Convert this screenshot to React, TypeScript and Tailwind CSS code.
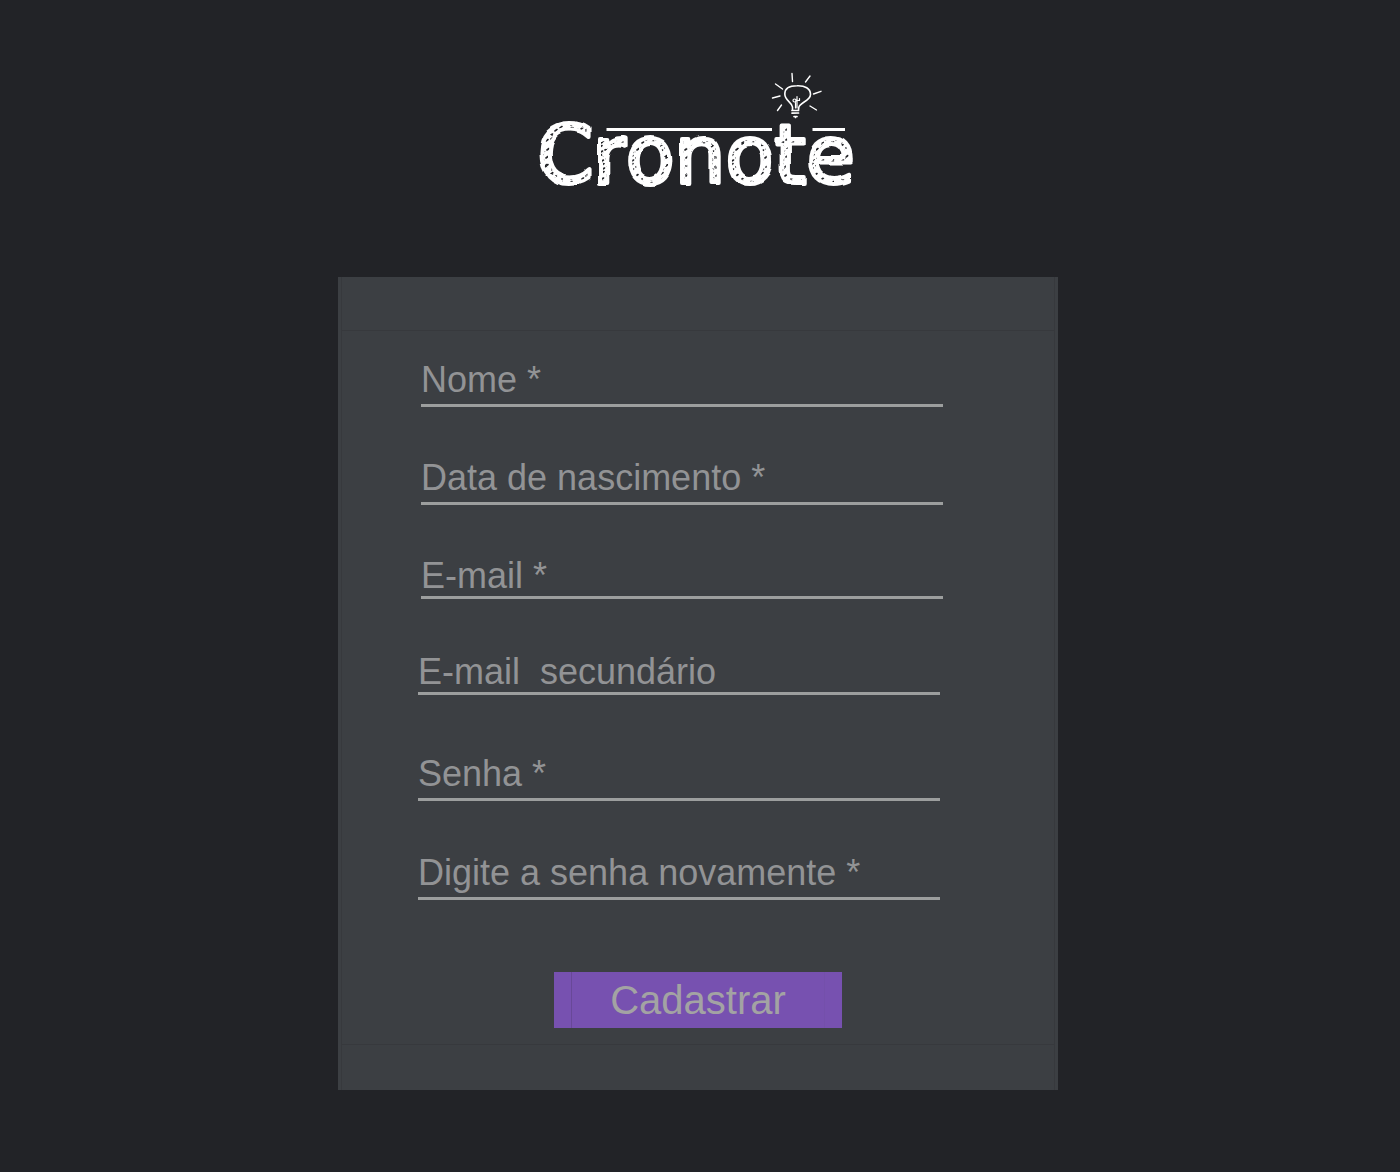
import React from "react";

type Field = { id: string; label: string; type: string; className: string };

const personal: Field[] = [
  { id: "nome", label: "Nome *", type: "text", className: "h-12 pb-1" },
  { id: "nascimento", label: "Data de nascimento *", type: "text", className: "mt-[50px] h-12 pb-1" },
  { id: "email", label: "E-mail *", type: "email", className: "mt-[50px] h-11" },
];

const access: Field[] = [
  { id: "email2", label: "E-mail  secundário", type: "email", className: "h-11" },
  { id: "senha", label: "Senha *", type: "password", className: "mt-[58px] h-12 pb-1" },
  { id: "senha2", label: "Digite a senha novamente *", type: "password", className: "mt-[51px] h-12 pb-1" },
];

function Fields({ items }: { items: Field[] }) {
  return (
    <>
      {items.map((f) => (
        <input
          key={f.id}
          id={f.id}
          name={f.id}
          type={f.type}
          aria-label={f.label}
          placeholder={f.label}
          className={`w-full border-b-[3px] border-[#9c9e9e] bg-transparent text-4xl text-[#929395] outline-none placeholder:text-[#929395] placeholder:opacity-100 ${f.className}`}
        />
      ))}
    </>
  );
}

function Logo() {
  return (
    <h1 className="w-[340px]">
      <svg viewBox="528 65 340 140" className="block w-full overflow-visible" role="img" aria-label="Cronote">
        <defs>
          <pattern id="chalk" width="10" height="9" patternUnits="userSpaceOnUse">
            <rect width="10" height="9" fill="#fff" />
            <path
              d="M1 3l2-1.500M6 5l2-1.500M2 8l1.500-1"
              stroke="#222327"
              strokeWidth="1.600"
              strokeLinecap="round"
            />
          </pattern>
          <filter id="rough" x="-5%" y="-5%" width="110%" height="110%">
            <feTurbulence type="fractalNoise" baseFrequency="0.05" numOctaves="1" seed="4" result="n" />
            <feDisplacementMap in="SourceGraphic" in2="n" scale="5" xChannelSelector="R" yChannelSelector="G" />
          </filter>
        </defs>
        <g fill="none" stroke="#fff" strokeLinecap="round" strokeLinejoin="round">
          <path d="M792 73.500L792.500 81.500M810 76L805.500 82M775.500 84L782.500 89M772.500 98L780 96M777.500 110.500L781.500 105M813.500 94L821 91.300M810 106L816.500 110" strokeWidth="1.400" />
          <path d="M792.500 110V107C792 102.500 784.800 100.500 784.800 94C784.800 88 790 85.800 797 85.800C805 85.500 810.500 88.500 810.500 94.500C810.500 101 799.500 102.500 798.800 107.500L798.500 110" strokeWidth="1.600" />
          <path d="M795.500 108V102.500M797 108V96.500M793 100.500C793 98.500 796 98.500 796 100.500C796 102.500 793 102.500 793 100.500M797 100.500H799.500V98.500" strokeWidth="1.200" />
          <path d="M792 110.500H798.500M792 113.200L798.500 113M794 116.500H797M795.500 117.500V117" strokeWidth="1.700" />
        </g>
        <path d="M606.500 129.500H772M812.500 129.500H845" stroke="#fff" strokeWidth="3" />
        <text
          x="537"
          y="183"
          className="[font-kerning:none]"
          fontFamily='"DejaVu Sans", sans-serif'
          fontSize="80"
          fill="url(#chalk)"
          stroke="#fff"
          strokeWidth="4"
          strokeLinejoin="round"
          filter="url(#rough)"
        >
          Cronote
        </text>
      </svg>
    </h1>
  );
}

export default function App() {
  return (
    <main className="flex min-h-screen flex-col items-center bg-[#222327] pt-[65px] pr-1 pb-20 font-['Liberation_Sans',Arial,sans-serif]">
      <Logo />
      <form
        className="mt-[72px] w-full max-w-[720px] bg-[#3c3f43] px-[3px]"
        onSubmit={(e) => e.preventDefault()}
      >
        <div className="border-x border-[#37393d]">
          <div className="h-[54px] border-b border-[#37393d]" />
          <div className="flex flex-col pt-7 pr-[111px] pl-[79px]">
            <Fields items={personal} />
          </div>
          <div className="mt-[52px] flex flex-col pr-[114px] pl-[76px]">
            <Fields items={access} />
          </div>
          <div className="mt-[72px] flex justify-center border-b border-[#37393d] pb-4">
            <button
              type="submit"
              className="h-14 w-[288px] bg-[#7751b0] px-[17px] text-[40px] leading-[56px] text-[#a3a3a3]"
            >
              <span className="block border-x border-l-[#684898] border-r-[#7450ab]">Cadastrar</span>
            </button>
          </div>
          <div className="h-[45px]" />
        </div>
      </form>
    </main>
  );
}
